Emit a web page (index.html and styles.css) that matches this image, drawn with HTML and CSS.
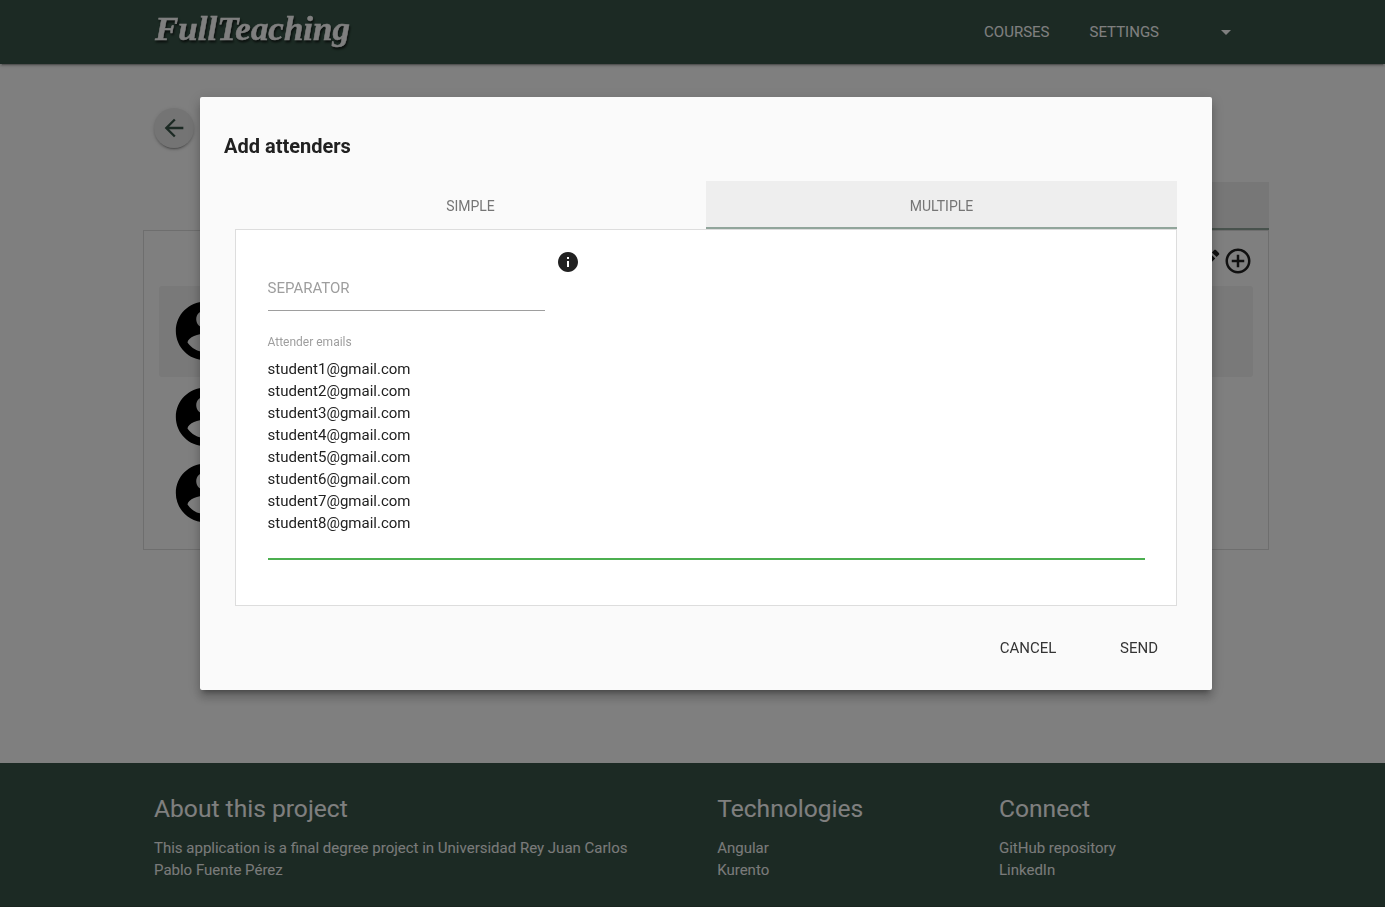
FILE: index.html
```html
<!DOCTYPE html>
<html lang="en">
<head>
<meta charset="utf-8">
<title>FullTeaching</title>
<link rel="stylesheet" href="styles.css">
</head>
<body>
<svg class="defs" width="0" height="0">
  <symbol id="account" viewBox="0 0 24 24"><path d="M12 2C6.480 2 2 6.480 2 12s4.480 10 10 10 10-4.480 10-10S17.520 2 12 2zm0 3c1.660 0 3 1.340 3 3s-1.340 3-3 3-3-1.340-3-3 1.340-3 3-3zm0 14.200c-2.500 0-4.710-1.280-6-3.220.030-1.990 4-3.080 6-3.080 1.990 0 5.970 1.090 6 3.080-1.290 1.940-3.500 3.220-6 3.220z"/></symbol>
</svg>
<div class="page">
  <header class="navbar">
    <svg class="logo" width="204" height="48" viewBox="0 0 204 48"><text x="4" y="33" textLength="195" lengthAdjust="spacingAndGlyphs">FullTeaching</text></svg>
    <nav class="nav">
      <a class="nav-link">COURSES</a>
      <a class="nav-link">SETTINGS</a>
      <span class="caret"></span>
    </nav>
  </header>
  <main class="content">
    <div class="back"><svg width="28" height="28" viewBox="0 0 24 24"><path d="M20 11H7.830l5.590-5.590L12 4l-8 8 8 8 1.410-1.410L7.830 13H20v-2z"/></svg></div>
    <div class="course-tabs"><span class="course-tab"></span></div>
    <section class="course-panel">
      <div class="tools">
        <svg width="30" height="30" viewBox="0 0 24 24"><path d="M3 17.250V21h3.750L17.810 9.940l-3.750-3.750L3 17.250zM20.710 7.040c.390-.390.390-1.020 0-1.410l-2.340-2.340c-.390-.390-1.020-.390-1.410 0l-1.830 1.830 3.750 3.750 1.830-1.830z"/></svg>
        <svg width="30" height="30" viewBox="0 0 24 24"><path d="M13 7h-2v4H7v2h4v4h2v-4h4v-2h-4V7zm-1-5C6.480 2 2 6.480 2 12s4.480 10 10 10 10-4.480 10-10S17.520 2 12 2zm0 18c-4.410 0-8-3.590-8-8s3.590-8 8-8 8 3.590 8 8-3.590 8-8 8z"/></svg>
      </div>
      <div class="attender selected"><svg class="avatar"><use href="#account"/></svg></div>
      <div class="attender"><svg class="avatar"><use href="#account"/></svg></div>
      <div class="attender"><svg class="avatar"><use href="#account"/></svg></div>
    </section>
  </main>
  <footer class="footer">
    <div class="about"><h5>About this project</h5><p>This application is a final degree project in Universidad Rey Juan Carlos</p><p>Pablo Fuente Pérez</p></div>
    <div><h5>Technologies</h5><p>Angular</p><p>Kurento</p></div>
    <div><h5>Connect</h5><p>GitHub repository</p><p>LinkedIn</p></div>
  </footer>
</div>
<div class="overlay">
  <div class="modal">
    <h1 class="modal-title">Add attenders</h1>
    <div class="tabs"><a class="tab">SIMPLE</a><a class="tab active">MULTIPLE</a></div>
    <div class="form">
      <div class="separator-row">
        <div class="separator">SEPARATOR</div>
        <svg class="info" width="24" height="24" viewBox="0 0 24 24"><path d="M12 2C6.480 2 2 6.480 2 12s4.480 10 10 10 10-4.480 10-10S17.520 2 12 2zm1 15h-2v-6h2v6zm0-8h-2V7h2v2z"/></svg>
      </div>
      <div class="label">Attender emails</div>
      <div class="emails">student1@gmail.com
student2@gmail.com
student3@gmail.com
student4@gmail.com
student5@gmail.com
student6@gmail.com
student7@gmail.com
student8@gmail.com</div>
    </div>
    <div class="actions"><a>CANCEL</a><a>SEND</a></div>
  </div>
</div>
</body>
</html>
```
FILE: styles.css
```css
* { box-sizing: border-box; }
body { margin: 0; font: 15px/22px Roboto, sans-serif; color: #212121; overflow: hidden; }
h1, h5, p { margin: 0; font-weight: 400; }
svg { display: block; flex: none; }
.defs { position: absolute; }
.page { height: 907px; display: flex; flex-direction: column; background: #fff; }
.navbar { height: 64px; flex: none; padding: 0 154px 0 151px; display: flex; justify-content: space-between; background: #385548; color: #fff; box-shadow: 0 2px 2px 0 rgba(0,0,0,.14), 0 1px 5px 0 rgba(0,0,0,.12), 0 3px 1px -2px rgba(0,0,0,.2); z-index: 1; }
.logo { margin-top: 7px; font: italic 700 34px "Liberation Serif", serif; fill: #fff; stroke: #fff; stroke-width: .5px; filter: drop-shadow(1px 2px 1px rgba(0,0,0,.7)); }
.nav { display: flex; align-items: center; line-height: 64px; }
.nav-link { margin-right: 40px; }
.caret { border: 5px solid transparent; border-top-color: #fff; border-bottom: 0; margin-left: 22px; }
.content { flex: 1; padding: 44px 116px 0 143px; display: flex; flex-direction: column; }
.back { width: 40px; height: 40px; margin-left: 11px; border-radius: 50%; background: #e8e8e8; fill: #385548; display: flex; align-items: center; justify-content: center; box-shadow: 0 2px 2px 0 rgba(0,0,0,.14), 0 1px 5px 0 rgba(0,0,0,.12), 0 3px 1px -2px rgba(0,0,0,.2); }
.course-tabs { height: 48px; margin-top: 34px; display: flex; justify-content: flex-end; }
.course-tab { width: 50%; background: #eee; border-bottom: 2px solid #91a59b; }
.course-panel { height: 320px; border: 1px solid #ddd; padding: 15px; display: flex; flex-direction: column; }
.tools { height: 40px; margin-right: -.4px; display: flex; justify-content: flex-end; fill: #212121; }
.attender { height: 76px; padding-left: 11px; display: flex; align-items: center; }
.selected { height: 91px; margin-bottom: 2px; padding-bottom: 1px; background: #f2f2f2; border-radius: 3px; }
.avatar { width: 70px; height: 70px; fill: #000; }
.footer { height: 144px; padding: 30px 0 0 154px; display: grid; grid-template-columns: 563.2px 281.8px 1fr; align-content: start; background: #385548; color: #fff; border-bottom: 1px solid #32493e; }
.footer h5 { font-size: 24.6px; line-height: 32px; margin-bottom: 12px; }
.footer p { color: #f5f5f5; }
.overlay { position: fixed; inset: 0; background: rgba(0,0,0,.5); padding: 97px 173px 0 200px; z-index: 2; }
.modal { height: 593px; padding: 24px; background: #fafafa; border-radius: 2px; box-shadow: 0 8px 10px 1px rgba(0,0,0,.14), 0 3px 14px 2px rgba(0,0,0,.12), 0 5px 5px -3px rgba(0,0,0,.3); }
.modal-title { font-size: 20px; font-weight: 700; line-height: 30px; margin-top: 10px; }
.tabs { height: 48px; margin: 20px 11px 0; display: flex; }
.tab { flex: 1; text-align: center; font-size: 14px; line-height: 50px; color: #757575; }
.active { background: #eee; border-bottom: 2px solid #91a59b; }
.form { height: 377px; margin: 0 11px; padding: 20px 31px 0 31.5px; background: #fff; border: 1px solid #ddd; }
.separator-row { display: flex; gap: 11px; }
.separator { width: 277.5px; height: 61px; padding-top: 27px; color: #9e9e9e; border-bottom: 1px solid #9e9e9e; }
.info { fill: #212121; }
.label { margin-top: 20px; font-size: 12px; color: #9e9e9e; }
.emails { height: 202px; margin-top: 5px; white-space: pre; border-bottom: 2px solid #4caf50; }
.actions { margin-top: 24px; padding-right: 30px; line-height: 36px; display: flex; justify-content: flex-end; gap: 63.7px; color: #343434; }
```
